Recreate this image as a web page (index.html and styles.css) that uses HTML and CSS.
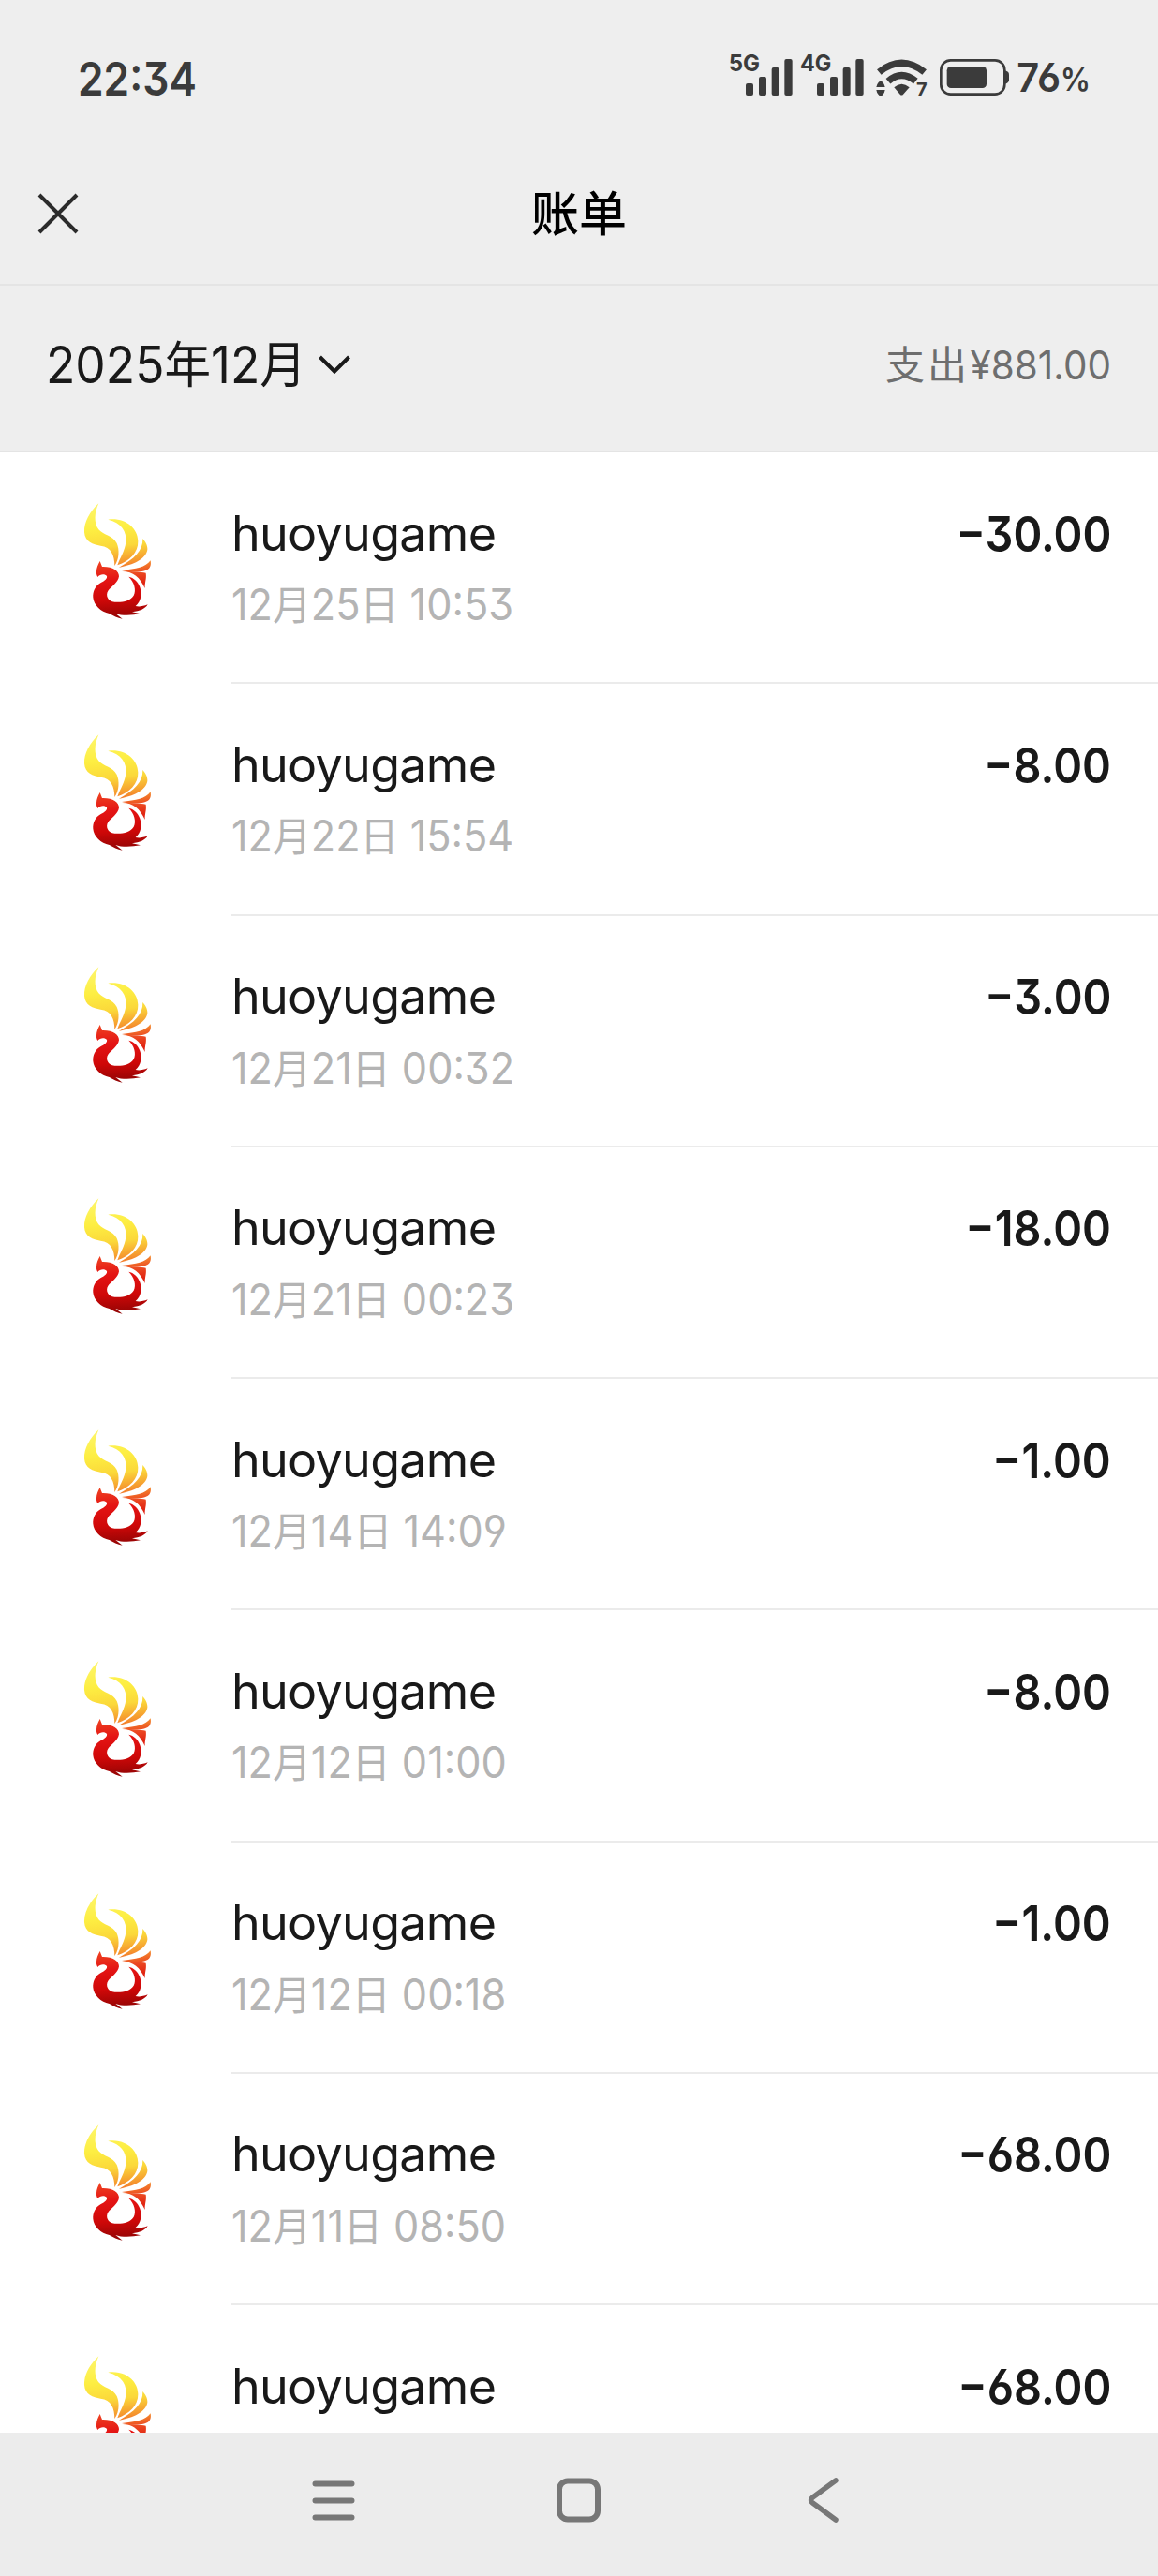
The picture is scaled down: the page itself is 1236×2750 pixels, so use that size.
FILE: index.html
```html
<!DOCTYPE html>
<html lang="zh-CN">
<head>
<meta charset="utf-8">
<title>账单</title>
<link rel="stylesheet" href="styles.css">
</head>
<body>
<svg class="defs" width="0" height="0" aria-hidden="true">
  <defs>
    <linearGradient id="wing" gradientUnits="userSpaceOnUse" x1="140" y1="50" x2="170" y2="320">
      <stop offset="0" stop-color="#fdf56a"/><stop offset=".3" stop-color="#fdee42"/><stop offset=".52" stop-color="#fbd83a"/><stop offset=".72" stop-color="#f5932e"/><stop offset=".86" stop-color="#ec4a22"/><stop offset="1" stop-color="#e02010"/>
    </linearGradient>
    <linearGradient id="bird" gradientUnits="userSpaceOnUse" x1="150" y1="240" x2="160" y2="425">
      <stop offset="0" stop-color="#ee4020"/><stop offset=".3" stop-color="#e41414"/><stop offset=".65" stop-color="#cf0808"/><stop offset="1" stop-color="#8e0404"/>
    </linearGradient>
    <symbol id="phoenix" viewBox="0 0 330 480">
      <g fill="url(#wing)">
        <path d="M106 52C78 78 58 112 60 145C62 175 88 185 112 188C146 192 157 218 157 252C172 232 173 200 164 180C152 156 122 154 106 136C90 114 92 84 106 52Z"/>
        <path d="M136 104C178 114 197 142 193 176C190 205 174 226 166 250C205 236 233 210 232 173C231 130 190 97 136 104Z"/>
        <path d="M247 165C248 205 220 229 171 257C216 249 258 230 262 200C263 187 255 174 247 165Z"/>
        <path d="M272 235C256 257 226 262 180 267C216 276 261 272 269 258C274 250 273 243 272 235Z"/>
        <path d="M183 270C216 270 239 290 254 324C253 304 260 294 257 275C240 272 216 270 183 270Z"/>
      </g>
      <path fill="url(#bird)" d="M110 237C104 249 99 258 99 270C98 277 100 283 103 288C110 278 126 277 132 285C134 293 126 300 113 306C94 316 87 336 88 353C90 378 113 399 140 405C153 413 166 419 182 422L160 405C180 413 214 411 240 406L213 400C238 397 255 390 263 376C248 382 235 384 224 381C242 365 246 341 238 320C232 303 218 290 202 287C220 304 227 330 218 347C207 365 182 370 157 368C135 366 127 346 136 332C145 320 168 307 171 286C171 267 151 254 117 255Z"/>
    </symbol>
  </defs>
</svg>
<div class="screen">
  <header class="status">
    <span class="clock">22:34</span>
    <svg class="indicators" viewBox="0 0 1260 270" fill="#3b3b3b">
      <g class="net"><text x="53" y="108" textLength="100" lengthAdjust="spacingAndGlyphs">5G</text><text x="282" y="108" textLength="100" lengthAdjust="spacingAndGlyphs">4G</text></g>
      <g>
        <rect x="108" y="147" width="24" height="39" rx="6"/><rect x="150" y="126" width="24" height="60" rx="6"/><rect x="191" y="96" width="24" height="90" rx="6"/><rect x="232" y="69" width="25" height="117" rx="6"/>
        <rect x="336" y="147" width="24" height="39" rx="6"/><rect x="378" y="126" width="24" height="60" rx="6"/><rect x="419" y="96" width="24" height="90" rx="6"/><rect x="460" y="69" width="25" height="117" rx="6"/>
      </g>
      <g fill="none" stroke="#3b3b3b" stroke-width="22">
        <path d="M535 111Q607 53 680 111"/><path d="M564 140Q607 103 652 140"/>
      </g>
      <path d="M583 160Q607 139 632 160L612 182Q607 187 602 182Z"/>
      <path d="M526 159Q527 151 533 144Q540 135 547 144Q553 151 554 159ZM526 168H554Q553 176 547 183Q540 192 533 183Q527 176 526 168Z"/>
      <text class="gen" x="654" y="189">7</text>
      <rect x="733" y="73" width="204" height="109" rx="31" fill="none" stroke="#3b3b3b" stroke-width="8"/>
      <rect x="752" y="93" width="127" height="69" rx="13"/>
      <path d="M938 106Q951 109 951 119V136Q951 146 938 149Z"/>
      <text class="pct" x="976" y="175" textLength="140" lengthAdjust="spacingAndGlyphs">76</text><text class="sign" x="1115" y="171" textLength="97" lengthAdjust="spacingAndGlyphs">%</text>
    </svg>
  </header>
  <nav class="titlebar">
    <svg class="close" viewBox="0 0 44 44" fill="none" stroke="#2b2b2b" stroke-width="4"><path d="M2 2L42 42M42 2L2 42"/></svg>
    <h1>账单</h1>
  </nav>
  <section class="filter">
    <div class="month"><span class="month-text">2025<b>年</b>12<b>月</b></span>
      <svg class="chevron" viewBox="0 0 34 20" fill="none" stroke="#191919" stroke-width="4"><path d="M1.500 2L17 17.500L32.500 2"/></svg>
    </div>
    <div class="total"><b>支出</b><span>¥881.00</span></div>
  </section>
  <main class="list">
    <article class="row"><svg class="logo"><use href="#phoenix"/></svg><div class="info"><div class="name">huoyugame</div><div class="date">12<b>月</b>25<b>日</b> 10:53</div></div><div class="amount"><span>−30.00</span></div></article>
    <article class="row"><svg class="logo"><use href="#phoenix"/></svg><div class="info"><div class="name">huoyugame</div><div class="date">12<b>月</b>22<b>日</b> 15:54</div></div><div class="amount"><span>−8.00</span></div></article>
    <article class="row"><svg class="logo"><use href="#phoenix"/></svg><div class="info"><div class="name">huoyugame</div><div class="date">12<b>月</b>21<b>日</b> 00:32</div></div><div class="amount"><span>−3.00</span></div></article>
    <article class="row"><svg class="logo"><use href="#phoenix"/></svg><div class="info"><div class="name">huoyugame</div><div class="date">12<b>月</b>21<b>日</b> 00:23</div></div><div class="amount"><span>−18.00</span></div></article>
    <article class="row"><svg class="logo"><use href="#phoenix"/></svg><div class="info"><div class="name">huoyugame</div><div class="date">12<b>月</b>14<b>日</b> 14:09</div></div><div class="amount"><span>−1.00</span></div></article>
    <article class="row"><svg class="logo"><use href="#phoenix"/></svg><div class="info"><div class="name">huoyugame</div><div class="date">12<b>月</b>12<b>日</b> 01:00</div></div><div class="amount"><span>−8.00</span></div></article>
    <article class="row"><svg class="logo"><use href="#phoenix"/></svg><div class="info"><div class="name">huoyugame</div><div class="date">12<b>月</b>12<b>日</b> 00:18</div></div><div class="amount"><span>−1.00</span></div></article>
    <article class="row"><svg class="logo"><use href="#phoenix"/></svg><div class="info"><div class="name">huoyugame</div><div class="date">12<b>月</b>11<b>日</b> 08:50</div></div><div class="amount"><span>−68.00</span></div></article>
    <article class="row"><svg class="logo"><use href="#phoenix"/></svg><div class="info"><div class="name">huoyugame</div></div><div class="amount"><span>−68.00</span></div></article>
  </main>
  <footer class="keys">
    <svg viewBox="0 0 50 50" fill="none" stroke="#777" stroke-width="6" stroke-linecap="round"><path d="M5.500 7.500H44.500M5.500 25.500H44.500M5.500 43.500H44.500"/></svg>
    <svg viewBox="0 0 50 50" fill="none" stroke="#777" stroke-width="6"><rect x="4" y="4.500" width="41" height="41" rx="9"/></svg>
    <svg viewBox="0 0 50 50" fill="none" stroke="#777" stroke-width="5.500" stroke-linecap="round"><path d="M37 4L12.500 22Q8.500 25 12.500 28L37 46"/></svg>
  </footer>
</div>
</body>
</html>
```
FILE: styles.css
```css
* { box-sizing: border-box; }
body {
  margin: 0;
  background: #fff;
  color: #191919;
  font-family: Inter, "Noto Sans CJK SC", sans-serif;
  font-feature-settings: "cv09", "cv03", "cv04";
}
b { font-weight: inherit; font-family: "Noto Sans CJK SC", sans-serif; }
.defs { display: block; height: 0; }
.screen { width: 1236px; height: 2750px; display: flex; flex-direction: column; overflow: hidden; }

.status {
  height: 160px;
  flex: none;
  display: flex;
  justify-content: space-between;
  padding: 40px 56px 0 83px;
  background: #eee;
  color: #3b3b3b;
}
.clock { font-size: 50px; font-weight: 600; line-height: 88px; transform: scaleX(.885); transform-origin: left; white-space: nowrap; }
.indicators { width: 420px; height: 90px; }
.net { font-size: 73px; font-weight: 700; }
.gen { font-size: 60px; font-weight: 700; }
.pct { font-size: 128px; font-weight: 600; }
.sign { font-size: 104px; font-weight: 600; }

.titlebar {
  height: 145px;
  flex: none;
  display: grid;
  grid-template-columns: 120px 1fr 120px;
  align-items: center;
  padding-bottom: 10px;
  background: #eee;
  border-bottom: 2px solid #e4e4e4;
}
.close { width: 44px; height: 44px; margin-left: 40px; margin-top: 2px; }
.titlebar h1 { margin: -4px 0 0; text-align: center; color: #000; font: 500 51px/80px "Noto Sans CJK SC", sans-serif; }

.filter {
  height: 178px;
  flex: none;
  display: flex;
  align-items: center;
  justify-content: space-between;
  padding: 0 50px 9px 49px;
  background: #eee;
  border-bottom: 2px solid #e4e4e4;
}
.month { display: flex; align-items: center; }
.month-text { font-size: 55px; line-height: 80px; width: 291px; margin-top: -2px; white-space: nowrap; transform: scaleX(.935); transform-origin: left; }
.month-text b { font-size: 53px; }
.chevron { width: 34px; height: 20px; }
.total { display: flex; align-items: baseline; margin-top: -2px; color: #6e6e6e; font-size: 43px; line-height: 60px; }
.total b { font-size: 42px; letter-spacing: 3px; margin-right: -9px; }
.total span { transform: scaleX(.94); transform-origin: right; }

.list { flex: 1; min-height: 0; overflow: hidden; background: #fff; }
.row { height: 247.25px; display: flex; }
.logo { width: 110px; height: 160px; margin: 37px 67px 0 70px; flex: none; }
.info { flex: 1; border-bottom: 2px solid #ebebeb; padding-top: 51.5px; }
.name { font-size: 52px; line-height: 70px; letter-spacing: -.7px; }
.date { margin-top: 9.5px; font-size: 46px; font-weight: 400; line-height: 60px; color: #b4b4b4; white-space: nowrap; transform: scaleX(.94); transform-origin: left; }
.date b { font-size: 43.5px; }
.amount { padding: 52.5px 50px 0 0; border-bottom: 2px solid #ebebeb; font-size: 52px; font-weight: 600; line-height: 70px; text-align: right; }
.amount span { display: inline-block; transform: scaleX(.9); transform-origin: right; }

.keys { height: 153px; flex: none; background: #ececec; display: flex; justify-content: center; gap: 212px; padding: 47px 1px 0 0; }
.keys svg { width: 50px; height: 50px; }
```
